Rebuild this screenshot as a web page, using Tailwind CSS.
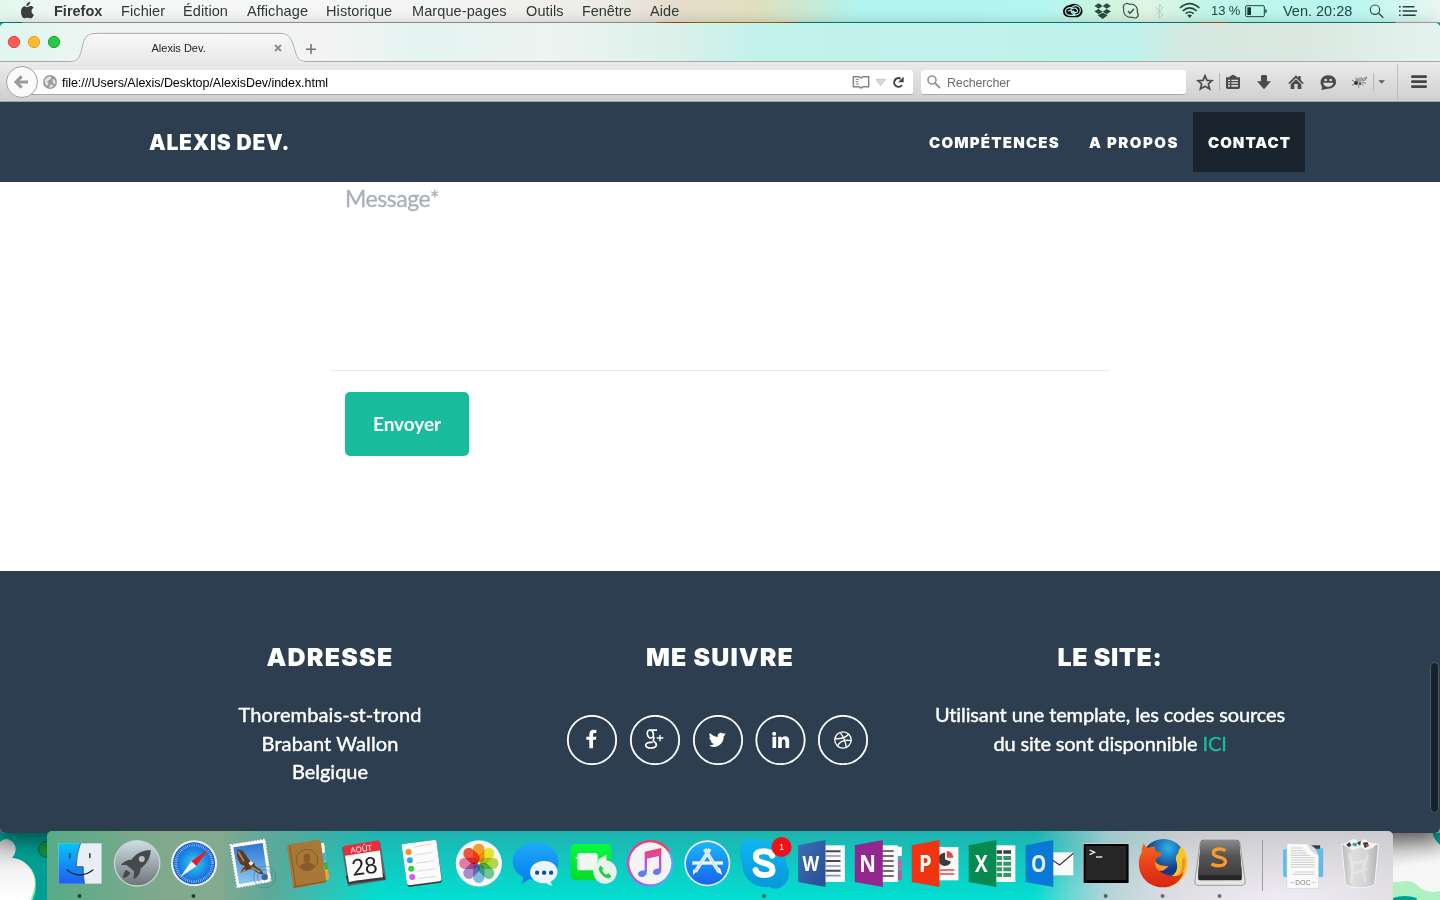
<!DOCTYPE html>
<html lang="fr">
<head>
<meta charset="utf-8">
<title>Alexis Dev.</title>
<script src="https://cdn.jsdelivr.net/npm/@tailwindcss/browser@4"></script>
</head>
<body class="w-[1440px] h-[900px] overflow-hidden relative bg-[#00a99d] font-['Liberation_Sans',sans-serif]">

<!-- Wallpaper -->
<svg class="absolute left-0 top-[820px]" width="1440" height="80" viewBox="0 0 4320 240">
  <defs>
    <linearGradient id="cl" x1="0" y1="0" x2="0" y2="1"><stop offset="0" stop-color="#c4c4c4"/><stop offset=".5" stop-color="#f3f3f3"/><stop offset="1" stop-color="#fff"/></linearGradient>
    <linearGradient id="cr" x1="0" y1="0" x2=".3" y2="1"><stop offset="0" stop-color="#8c8c8c"/><stop offset=".8" stop-color="#f6f6f6"/></linearGradient>
  </defs>
  <rect width="4320" height="240" fill="#009e94"/>
  <circle cx="140" cy="88" r="24" fill="#11933f" stroke="#0b5c3c" stroke-width="3"/>
  <path d="M50 120Q95 130 106 175Q112 205 98 240H0V120Z" fill="#8fe3a4"/>
  <path d="M0 66Q10 55 25 58Q46 66 47 88Q46 104 36 113Q85 118 102 170Q108 195 98 222L92 240H0Z" fill="url(#cl)"/>
  <rect x="4178" y="0" width="142" height="240" fill="#aef0c0"/>
  <path d="M3930 0H4320V212Q4290 222 4262 205Q4240 180 4215 183Q4190 190 3930 182Z" fill="url(#cr)"/>
  <path d="M4298 38H4320V74Q4300 56 4298 38Z M4178 234Q4215 222 4250 234V240H4178Z" fill="#00a093"/>
</svg>

<!-- Menu bar -->
<header class="absolute inset-x-0 top-0 h-[23px] flex text-[14px] leading-[22px] text-[#2f3a36] whitespace-nowrap [background:linear-gradient(90deg,#00837a_0px,#00837a_22px,#9a9a9a_23px,#9a9a9a_656px,#8a7a10_657px,#a04a10_680px,#8a7a10_700px,#8a7a10_770px,#a04a10_790px,#00837a_801px,#00837a_1198px,#9a5a20_1200px,#9a5a20_1228px,#00837a_1229px,#00837a_1395px,#a8a8a8_1396px)_0_22px/1440px_1px_no-repeat,linear-gradient(90deg,#e4f7ef_0px,#f6f8f7_90px,#f5f5f5_440px,#ecebe6_610px,#e5dccb_680px,#e0dfbe_760px,#c8ead6_810px,#b2f4ee_860px,#b3f6ef_1040px,#cff5e0_1110px,#e0f5e2_1150px,#c0f6ea_1210px,#b8f7f0_1350px,#e8f7f2_1440px)]">
  <svg class="w-[54px] h-[22px] shrink-0" viewBox="0 0 162 66"><path fill="#3b3f3d" d="M90 10C91 17 85 23 79 23C78 16 84 11 90 10ZM80 27C83 27 87 23 92 23C96 23 99 25 101 28C92 33 93 45 102 49C99 56 95 60 92 60C88 60 86 58 82 58C78 58 76 60 73 60C69 60 63 51 63 41C63 29 70 24 75 24C77 24 79 27 80 27Z" transform="translate(0 -5)"/></svg>
  <div class="flex w-[1001px] text-[14.500px] tracking-[0.1px]">
    <b class="w-[67px] tracking-normal">Firefox</b>
    <span class="w-[62px]">Fichier</span>
    <span class="w-[64px]">Édition</span>
    <span class="w-[79px]">Affichage</span>
    <span class="w-[86px]">Historique</span>
    <span class="w-[114px]">Marque-pages</span>
    <span class="w-[56px]">Outils</span>
    <span class="w-[68px] tracking-[-0.070px]">Fenêtre</span>
    <span>Aide</span>
  </div>
  <svg class="w-[33px] h-[22px]" viewBox="285 0 99 66"><path fill="#0a100e" d="M328 15Q345 6 359 17Q371 27 366 41Q360 52 347 52H328Q309 50 309 33Q311 19 328 15Z"/><g fill="none" stroke="#b9f5ec" stroke-width="3.500"><circle cx="347" cy="31" r="14"/><path d="M338 24Q318 20 316 34Q318 46 332 46H346M324 34Q332 28 338 36L346 44M336 27Q346 20 352 30Q354 38 346 38L338 32"/></g></svg>
  <svg class="w-[30px] h-[22px]" viewBox="384 0 90 66"><path fill="#2d4a42" d="M416 10L428 18L416 26L403 18ZM440 10L453 18L440 26L428 18ZM403 34L416 27L428 35L416 43ZM453 34L440 27L428 35L440 43ZM413 46L428 38L443 46L428 57Z"/></svg>
  <svg class="w-[28px] h-[22px]" viewBox="474 0 84 66"><path fill="none" stroke="#3f564c" stroke-width="3.500" d="M491 26C486 14 500 6 508 13C524 10 535 22 532 37C540 48 528 58 517 52C502 54 489 45 491 26Z"/><path fill="none" stroke="#3f564c" stroke-width="4.500" d="M504 33L510 40L522 26"/></svg>
  <svg class="w-[26px] h-[22px]" viewBox="558 0 78 66"><path fill="none" stroke="#b5cfc0" stroke-width="3" d="M586 22L609 44L598 54V13L609 23L586 45"/></svg>
  <svg class="w-[34px] h-[22px]" viewBox="636 0 102 66"><g fill="none" stroke="#24443c" stroke-width="5"><path d="M660 24Q689 -2 718 24"/><path d="M668 33Q689 14 710 33"/><path d="M677 41Q689 31 701 41"/></g><path fill="#24443c" d="M682 46Q689 41 696 46L689 54Z"/></svg>
  <span class="w-[36px] pl-[5px] text-[13px] tracking-[-0.100px] text-[#1c4a3f]">13 %</span>
  <svg class="w-[30px] h-[22px]" viewBox="846 0 90 66"><rect x="857" y="17" width="56" height="33" rx="4" fill="none" stroke="#1d4a41" stroke-width="3"/><rect x="862" y="22" width="11" height="23" fill="#123a32"/><path d="M917 28Q922 33 917 39Z" stroke="#1d4a41" stroke-width="2"/></svg>
  <span class="w-[88px] pl-[11px] text-[14.500px] text-[#1c4a3f]">Ven. 20:28</span>
  <svg class="w-[30px] h-[22px]" viewBox="1200 0 90 66"><circle cx="1245" cy="29" r="14" fill="none" stroke="#2c5248" stroke-width="3.500"/><path d="M1255 39L1270 53" stroke="#2c5248" stroke-width="4"/></svg>
  <svg class="w-[50px] h-[22px]" viewBox="1290 0 150 66"><path d="M1317 20H1322M1317 33H1322M1317 46H1322M1328 20H1363M1328 33H1371M1328 46H1367" stroke="#25423b" stroke-width="4.500"/></svg>
</header>

<!-- Browser window -->
<main class="absolute inset-x-0 top-[23px] h-[810px] rounded-[5px] overflow-hidden flex flex-col shadow-[0_8px_20px_rgba(0,0,0,0.5)] bg-white">
  <div class="h-[39px] shrink-0 relative bg-[linear-gradient(90deg,#dff5ef_0px,#eef5f3_90px,#f3f4f3_330px,#e4f4f1_420px,#edf3f1_550px,#dcf1ea_670px,#c3f1ec_760px,#bff2ec_1130px,#d5e8e0_1190px,#dbe8e1_1300px,#e4f3ef_1440px)]">
    <svg class="absolute inset-0" width="1440" height="39" viewBox="0 69 4320 117">
      <defs><linearGradient id="tab" x1="0" y1="0" x2="0" y2="1"><stop offset="0" stop-color="#f8f8f8"/><stop offset="1" stop-color="#e9e9e9"/></linearGradient></defs>
      <path d="M0 184.500H212C235 184 240 172 247 140C252 112 262 100 290 100H840C865 100 875 115 883 145C890 172 895 184 918 184.500H4320V190H0Z" fill="none" stroke="#a3a9a7" stroke-width="3"/>
      <path d="M212 186C237 184 242 172 249 140C254 112 264 102 290 102H840C863 102 873 115 881 145C888 172 893 184 918 186Z" fill="url(#tab)"/>
      <g stroke-width="3"><circle cx="42" cy="126" r="17" fill="#fc5b57" stroke="#e2443f"/><circle cx="102" cy="126" r="17" fill="#fdbc2f" stroke="#dfa023"/><circle cx="162" cy="126" r="17" fill="#29c941" stroke="#15ab2a"/></g>
      <path d="M825 135L843 153M843 135L825 153" stroke="#8d8d8d" stroke-width="6"/>
      <path d="M918 147.500H948M933 132V162" stroke="#6c7170" stroke-width="4.500"/>
    </svg>
    <div class="relative pl-[151.500px] pt-[17px] text-[11px] leading-[16px] text-[#222]">Alexis Dev.</div>
  </div>
  <div class="h-[40px] shrink-0 flex bg-linear-to-b from-[#ebebeb] to-[#cfcfcf] border-b border-[#a2a4a6]">
    <div class="w-[914px] relative pt-[8px] pl-[30px]">
      <div class="h-[25px] bg-white rounded-r-[3px] w-[883px] border-b border-[#a8a8a8] flex pl-[32px] text-[12.500px] leading-[26px] text-black whitespace-nowrap">
        <span class="w-[783px] tracking-[-0.044px]">file:///Users/Alexis/Desktop/AlexisDev/index.html</span>
        <svg class="w-[68px] h-[25px] shrink-0" viewBox="1095 210 204 75"><path d="M1120 230H1137L1143 234L1149 230H1166V260H1149L1143 264L1137 260H1120Z" fill="none" stroke="#858585" stroke-width="4.500"/><path d="M1127 238H1137M1127 245H1135M1127 252H1137" stroke="#858585" stroke-width="3"/><path d="M1188 238H1216L1202 257Z" fill="#d9d9d9" stroke="#b8b8b8" stroke-width="2"/><path d="M1266 255A13 13 0 1 1 1262 236" fill="none" stroke="#444" stroke-width="6"/><path d="M1271 230V247H1254Z" fill="#444"/></svg>
      </div>
      <svg class="absolute left-0 top-0" width="62" height="39" viewBox="0 186 186 117"><circle cx="66" cy="246" r="46.500" fill="#fafafa" stroke="#a3a3a3" stroke-width="3"/><path d="M84 246H50M65 229L48 246L65 263" fill="none" stroke="#999" stroke-width="9"/><circle cx="150" cy="246" r="21" fill="#9b9b9b"/><path d="M134 240Q142 228 154 230L152 238L142 244L146 252L140 258Q132 250 134 240ZM158 236Q168 240 166 252L158 250ZM150 254L162 256Q156 264 148 264Z" fill="#e2e2e2"/></svg>
    </div>
    <div class="w-[273px] pt-[8px] pl-[7px]">
      <div class="w-[265px] h-[25px] bg-white rounded-[3px] border-b border-[#a8a8a8] flex text-[12.500px] leading-[26px] text-[#6f6f6f]">
        <svg class="w-[26px] h-[25px]" viewBox="1323 210 78 75"><circle cx="1356" cy="240" r="12" fill="none" stroke="#969696" stroke-width="5"/><path d="M1365 249L1380 264" stroke="#969696" stroke-width="6"/></svg>
        <span class="tracking-[-0.160px]">Rechercher</span>
      </div>
    </div>
    <svg class="w-[34px] h-[39px]" viewBox="681 186 102 117"><path d="M735 227L741 241L756 242L745 252L749 267L735 259L721 267L725 252L714 242L729 241Z" fill="none" stroke="#4b4b4b" stroke-width="5"/><path d="M779 219V273" stroke="#b3b3b3" stroke-width="3"/></svg>
    <svg class="w-[28px] h-[39px]" viewBox="783 186 84 117"><path fill="#4b4b4b" fill-rule="evenodd" d="M798 232H809V228H813Q819 220 825 228H829V232H840V262Q840 267 835 267H803Q798 267 798 262ZM804 239V243H810V239ZM814 239V243H834V239ZM804 247V251H810V247ZM814 247V251H834V247ZM804 255V260H810V255ZM814 255V260H834V255Z"/></svg>
    <svg class="w-[31px] h-[39px]" viewBox="867 186 93 117"><path fill="#4b4b4b" d="M903 229Q903 225 908 225H916Q921 225 921 229V244H933L912 268L891 244H903Z"/></svg>
    <svg class="w-[32px] h-[39px]" viewBox="960 186 96 117"><path fill="#4b4b4b" d="M1008 226L1015 233V228H1022V240L1031 249L1028 253L1008 234L988 253L985 249ZM1008 238L1024 253V267H1013V252H1003V267H992V253Z"/></svg>
    <svg class="w-[32px] h-[39px]" viewBox="1056 186 96 117"><path fill="#4b4b4b" d="M1105 226C1120 226 1128 235 1128 246C1128 258 1118 266 1104 266C1098 266 1090 270 1083 269C1087 265 1087 262 1086 260C1078 250 1080 226 1105 226Z"/><g fill="#dedede"><circle cx="1097" cy="240" r="4"/><circle cx="1112" cy="240" r="4"/><path d="M1089 248H1120Q1117 260 1104 260Q1092 260 1089 248Z"/></g></svg>
    <svg class="w-[29px] h-[39px]" viewBox="1152 186 87 117"><ellipse cx="1198" cy="240" rx="12" ry="7" transform="rotate(-25 1198 240)" fill="#a5a5a5"/><circle cx="1188" cy="249" r="6" fill="#333"/><circle cx="1200" cy="251" r="4" fill="#555"/><path d="M1176 240L1184 246M1176 256L1184 252M1194 254L1197 263M1206 246L1218 250M1207 238L1220 231L1216 240L1208 242M1187 232L1192 242M1200 248L1210 256" fill="none" stroke="#666" stroke-width="2.500"/></svg>
    <svg class="w-[24px] h-[39px]" viewBox="1239 186 72 117"><path d="M1241 219V273" stroke="#b3b3b3" stroke-width="3"/><path d="M1255 241H1275L1265 251Z" fill="#5a5a5a"/></svg>
    <svg class="w-[43px] h-[39px]" viewBox="1311 186 129 117"><path d="M1312.500 192V300" stroke="#bdbdbd" stroke-width="3"/><path d="M1357 230H1397M1357 245H1397M1357 260H1397" stroke="#454545" stroke-width="8" stroke-linecap="round"/></svg>
  </div>

  <nav class="h-[80px] shrink-0 bg-[#2c3e50] flex items-center pl-[149px] pr-[135px] text-white font-[Inter,sans-serif] font-black whitespace-nowrap">
    <span class="text-[21px] leading-[60px] w-[765px] pt-px tracking-[0.750px]">ALEXIS DEV.</span>
    <div class="flex text-[15px] leading-[60px]">
      <a class="w-[160px] pl-[15px] pt-px tracking-[1.210px]">COMPÉTENCES</a>
      <a class="w-[119px] pl-[15px] pt-px tracking-[1.510px]">A PROPOS</a>
      <a class="w-[112px] h-[60px] pl-[15px] pt-px bg-[#1a242f] tracking-[1px]">CONTACT</a>
    </div>
  </nav>

  <section class="h-[389px] shrink-0 bg-white px-[330px] font-[Lato,sans-serif]">
    <div class="h-[189px] border-b border-[#e9ecee] pl-[15px] text-[23px] leading-[33px] text-[#a9b0b8] tracking-[-0.450px] [-webkit-text-stroke:0.300px_#a9b0b8]">Message*</div>
    <div class="mt-[21px] ml-[15px] w-[124px] h-[64px] rounded-[5px] bg-[#18bc9c] text-white font-bold text-[19px] leading-[64px] pl-[28px] tracking-[-0.067px]">Envoyer</div>
  </section>

  <footer class="grow bg-[#2c3e50] relative text-white pl-[135px] pr-[135px] pt-[69px] flex text-center font-[Lato,sans-serif] text-[20px] leading-[28.570px] whitespace-nowrap [font-variant-ligatures:none]">
    <div class="w-[390px]">
      <h3 class="font-[Inter,sans-serif] font-black text-[25px] leading-[34px] mb-[26px] tracking-[1.200px]">ADRESSE</h3>
      <p class="tracking-[0.100px] [-webkit-text-stroke:0.400px_white]">Thorembais-st-trond<br>Brabant Wallon<br><span class="tracking-normal">Belgique</span></p>
    </div>
    <div class="w-[390px]">
      <h3 class="font-[Inter,sans-serif] font-black text-[25px] leading-[34px] mb-[41px] tracking-[1.100px]">ME SUIVRE</h3>
      <div class="flex pl-[40px]">
        <svg class="w-[63px] h-[50px]" viewBox="45 255 189 150"><circle cx="126" cy="330" r="72.500" fill="none" stroke="#fff" stroke-width="5.500"/><path fill="#fff" d="M139 300V309H133Q129 309 129 314V320H139L138 329H129V355H118V329H109V320H118V313Q118 299 131 299Q137 299 139 300Z"/></svg>
        <svg class="w-[63px] h-[50px]" viewBox="234 255 189 150"><circle cx="315" cy="330" r="72.500" fill="none" stroke="#fff" stroke-width="5.500"/><g fill="none" stroke="#fff"><ellipse cx="301" cy="312" rx="9" ry="12" stroke-width="5" transform="rotate(-15 301 312)"/><path d="M302 300.500H321M309 320C318 326 304 330 312 335C325 343 319 354 302 354C284 354 281 338 301 337H308" stroke-width="5"/><path d="M320 324H340M330 315V334" stroke-width="4"/></g></svg>
        <svg class="w-[62.500px] h-[50px]" viewBox="423 255 187.500 150"><circle cx="504" cy="330" r="72.500" fill="none" stroke="#fff" stroke-width="5.500"/><path fill="#fff" d="M527 312Q524 317 521 319C522 337 508 351 492 351Q483 351 476 346Q486 347 492 342Q484 341 482 334H487Q478 331 478 322L483 324Q475 317 480 309Q489 320 503 321C501 310 512 304 520 311L527 308L522 315Z"/></svg>
        <svg class="w-[62.500px] h-[50px]" viewBox="610.500 255 187.500 150"><circle cx="690" cy="330" r="72.500" fill="none" stroke="#fff" stroke-width="5.500"/><circle cx="671" cy="311" r="6" fill="#fff"/><path fill="#fff" d="M666 320H677V354H666ZM683 320H693V325Q697 319 704 319Q716 319 716 334V354H705V336Q705 328 699 328Q694 328 694 335V354H683Z"/></svg>
        <svg class="w-[63px] h-[50px]" viewBox="798 255 189 150"><circle cx="879" cy="330" r="72.500" fill="none" stroke="#fff" stroke-width="5.500"/><g fill="none" stroke="#fff" stroke-width="4"><circle cx="879" cy="330" r="24.500"/><path d="M870 307Q886 326 889 353M854 326Q882 328 897 312M862 348Q874 326 904 332"/></g></svg>
      </div>
    </div>
    <div class="w-[390px]">
      <h3 class="font-[Inter,sans-serif] font-black text-[25px] leading-[34px] mb-[26px] tracking-[0.600px]">LE SITE:</h3>
      <p class="tracking-[-0.120px] [-webkit-text-stroke:0.400px_white]">Utilisant une template, les codes sources<br><span class="tracking-[-0.160px]">du site sont disponnible</span> <a class="text-[#18bc9c] [-webkit-text-stroke:0.400px_#18bc9c]">ICI</a></p>
    </div>
    <div class="absolute right-[1px] top-[91px] w-[9px] h-[151px] rounded-full bg-[#17212b] border border-[#4a5a68]"></div>
  </footer>
</main>

<!-- Dock -->
<aside class="absolute left-[47px] top-[831px] w-[1346px] h-[69px] rounded-t-[5px] flex pl-[3.500px] bg-[radial-gradient(ellipse_260px_70px_at_1240px_69px,rgba(242,238,246,0.95),rgba(242,238,246,0)),linear-gradient(90deg,#56ab86_0px,#7fa98c_110px,#84aa90_170px,#5fa898_220px,transparent_330px,transparent_990px,#9dc9cc_1060px,#cbccce_1140px,#cdcdcf_1346px),linear-gradient(180deg,#1eb4b0,#02dfd2)]">
  <svg class="w-[57.050px] h-[69px] shrink-0 overflow-visible" viewBox="151.500 33 171.150 207">
    <defs><linearGradient id="f1" x1="0" y1="0" x2="0" y2="1"><stop offset="0" stop-color="#06c3fb"/><stop offset="1" stop-color="#1c60f0"/></linearGradient></defs>
    <rect x="174" y="70" width="129" height="121" fill="#e9eef5" stroke="#c3cbd3" stroke-width="1"/><path d="M174 70H240Q228 100 227 140H248Q247 165 252 191H174Z" fill="url(#f1)"/><path d="M240 70Q228 100 227 140H248Q247 165 252 191" fill="none" stroke="#1d3557" stroke-width="2"/><path d="M208 101V113M268 101V113M200 150Q238 180 277 150" stroke="#14243a" stroke-width="4" fill="none" stroke-linecap="round"/><circle cx="237" cy="228" r="6" fill="#17472f"/>
  </svg>
  <svg class="w-[57.050px] h-[69px] shrink-0 overflow-visible" viewBox="322.650 33 171.150 207">
    <defs><linearGradient id="l1" x1="0" y1="0" x2="0" y2="1"><stop offset="0" stop-color="#cbdfe6"/><stop offset="1" stop-color="#6f7376"/></linearGradient></defs>
    <circle cx="410" cy="130" r="68" fill="url(#l1)" stroke="#ccd3d5" stroke-width="4"/><path fill="#46484b" d="M451 90C430 90 408 98 393 119C380 119 368 125 361 136L378 135L401 154L399 178C412 172 420 160 420 146C440 132 450 112 451 90ZM377 149Q367 160 368 175Q384 170 390 158Z"/><circle cx="424" cy="117" r="9" fill="#b6bdc1"/>
  </svg>
  <svg class="w-[57.050px] h-[69px] shrink-0 overflow-visible" viewBox="493.800 33 171.150 207">
    <defs><radialGradient id="s1"><stop offset="0" stop-color="#2ad3f5"/><stop offset="1" stop-color="#1559d8"/></radialGradient></defs>
    <circle cx="581" cy="130" r="69" fill="#eef3f6"/><circle cx="581" cy="130" r="63" fill="url(#s1)"/><circle cx="581" cy="130" r="55" fill="none" stroke="#c9ecfb" stroke-width="9" stroke-dasharray="1.500 4"/><path d="M624 87L573 124L588 138Z" fill="#fa1220"/><path d="M539 172L573 124L588 138Z" fill="#f4f4f4"/><circle cx="579" cy="228" r="6" fill="#17472f"/>
  </svg>
  <svg class="w-[57.050px] h-[69px] shrink-0 overflow-visible" viewBox="664.950 33 171.150 207">
    <defs><linearGradient id="m1" x1="0" y1="0" x2="0" y2="1"><stop offset="0" stop-color="#2b76d5"/><stop offset="1" stop-color="#8fc9f4"/></linearGradient></defs>
    <path d="M690 75L793 59L812 184L711 202Z" fill="#fff" stroke="#fff" stroke-width="5" stroke-dasharray="5 4"/><path d="M699 82L787 69L803 178L716 193Z" fill="url(#m1)"/><path fill="#5c3c22" d="M711 88Q705 110 720 132L734 139Q722 148 720 158L738 152Q745 147 757 148Q775 164 790 162L781 148L764 138L762 128L750 124Q744 116 728 92Z"/><path d="M713 94L731 124M753 142L780 156" stroke="#a58e74" stroke-width="5"/><path d="M744 130L751 123L760 128L752 138Z" fill="#f5efe0"/><path d="M720 158L738 152L732 146Z" fill="#d8822c"/><g fill="none" stroke="#4d7c8b" stroke-opacity=".7" stroke-width="2.500"><circle cx="793" cy="171" r="33"/><circle cx="793" cy="171" r="22"/><circle cx="793" cy="171" r="9" fill="#3c6786"/></g>
  </svg>
  <svg class="w-[57.050px] h-[69px] shrink-0 overflow-visible" viewBox="-3.900 33 171.150 207">
    <path d="M122 70L131 69L145 176L136 180Z" fill="#f1d9a0"/><path d="M122 70L131 69L134 97L125 99Z" fill="#f2f2f2"/><path d="M127 99L135 98L138 123L129 126Z" fill="#3bb5e8"/><path d="M130 127L140 125L143 148L134 151Z" fill="#32b44b"/><path d="M133 152L143 150L147 175L137 178Z" fill="#f6a11d"/>
    <path d="M20 80Q20 74 27 73L113 59Q119 58 121 64L138 182Q138 188 132 189L45 205Q39 206 38 200Z" fill="#a97839"/><path d="M28 76L47 203" stroke="#875b26" stroke-width="3"/><path d="M38 201L138 184" stroke="#7d5423" stroke-width="3"/><circle cx="80" cy="120" r="32" fill="none" stroke="#875c29" stroke-width="3"/><path d="M58 142Q62 130 74 130Q62 104 80 100Q98 104 86 129Q100 129 104 140Q82 162 58 142Z" fill="#875c29"/>
  </svg>
  <svg class="w-[57.050px] h-[69px] shrink-0 overflow-visible" viewBox="167.250 33 171.150 207">
    <path d="M185 82L300 66L318 180L203 198Z" fill="#5e6568"/><path d="M196 168L310 160L316 178L204 192Z" fill="#343a3d"/><path d="M194 104L299 91L308 172Q250 178 206 186Z" fill="#fbfbfb"/><path d="M190 78L295 61L300 91L195 107Z" fill="#ee2b37"/>
    <g transform="rotate(-8 250 120)" font-family="Liberation Sans,sans-serif" text-anchor="middle"><text x="248" y="95" font-size="25" fill="#fff" textLength="66" lengthAdjust="spacingAndGlyphs">AOÛT</text><text x="250" y="163" font-family="Lato,sans-serif" font-weight="400" font-size="68" fill="#222" textLength="78" lengthAdjust="spacingAndGlyphs">28</text></g>
  </svg>
  <svg class="w-[57.050px] h-[69px] shrink-0 overflow-visible" viewBox="338.400 33 171.150 207">
    <path d="M364 78Q363 73 369 72L462 60Q468 59 469 65L485 179Q485 187 480 188L389 200Q383 201 381 195Z" fill="#30373a"/><path d="M364 76Q363 73 369 72L462 60Q468 59 469 65L484 178Q484 183 478 184L388 196Q381 197 380 190Z" fill="#fbfbfb"/><path d="M400 81L454 72M403 105L458 97M407 130L462 122M411 154L466 146M412 176L466 169" stroke="#c9c9c9" stroke-width="2"/><circle cx="385" cy="96" r="9" fill="#fb8a22"/><circle cx="389" cy="121" r="9" fill="#28a4f5"/><circle cx="393" cy="146" r="9" fill="#2fd145"/><circle cx="396" cy="171" r="9" fill="#d95bea"/>
  </svg>
  <svg class="w-[57.050px] h-[69px] shrink-0 overflow-visible" viewBox="509.550 33 171.150 207">
    <circle cx="596" cy="132" r="69" fill="#b6bec0"/><circle cx="596" cy="130" r="69" fill="#f7f7f6"/>
    <g transform="translate(596 130)" class="*:mix-blend-multiply"><rect x="-17" y="-59" width="34" height="56" rx="17" fill="#fba22a"/><rect x="-17" y="-59" width="34" height="56" rx="17" fill="#f2e932" transform="rotate(45)"/><rect x="-17" y="-59" width="34" height="56" rx="17" fill="#b9dc4c" transform="rotate(90)"/><rect x="-17" y="-59" width="34" height="56" rx="17" fill="#6fcf9a" transform="rotate(135)"/><rect x="-17" y="-59" width="34" height="56" rx="17" fill="#86bfec" transform="rotate(180)"/><rect x="-17" y="-59" width="34" height="56" rx="17" fill="#ae94d3" transform="rotate(225)"/><rect x="-17" y="-59" width="34" height="56" rx="17" fill="#ea7fae" transform="rotate(270)"/><rect x="-17" y="-59" width="34" height="56" rx="17" fill="#f55a40" transform="rotate(315)"/></g>
  </svg>
  <svg class="w-[57.050px] h-[69px] shrink-0 overflow-visible" viewBox="680.700 33 171.150 207">
    <defs><linearGradient id="g1" x1="0" y1="0" x2="0" y2="1"><stop offset="0" stop-color="#1fa9fb"/><stop offset="1" stop-color="#067ee8"/></linearGradient></defs>
    <path d="M767 68C806 68 835 93 835 125C835 156 804 180 767 180Q756 180 747 177Q738 187 722 190Q732 180 728 170C708 160 698 143 698 125C698 93 728 68 767 68Z" fill="url(#g1)"/><path d="M791 123C816 123 832 137 832 156Q832 174 812 184Q811 191 817 197Q804 195 800 189C770 193 750 177 750 157C750 138 768 123 791 123Z" fill="#edf5fc"/><g fill="#0e4ea0"><circle cx="771" cy="158" r="6.500"/><circle cx="792" cy="158" r="6.500"/><circle cx="813" cy="158" r="6.500"/></g>
  </svg>
  <svg class="w-[57.050px] h-[69px] shrink-0 overflow-visible" viewBox="11.850 33 171.150 207">
    <defs><linearGradient id="ft" x1="0" y1="0" x2="0" y2="1"><stop offset="0" stop-color="#04fa3c"/><stop offset="1" stop-color="#06da2c"/></linearGradient></defs>
    <rect x="32" y="72" width="122" height="109" rx="14" fill="url(#ft)"/><rect x="52" y="99" width="61" height="52" rx="8" fill="#eff7ef"/><path d="M115 118L139 104V146L115 132Z" fill="#eff7ef"/><rect x="47" y="111" width="4" height="6" fill="#e3f3e3"/><circle cx="135" cy="156" r="35" fill="#e9f1ec"/><path d="M121 137Q113 143 119 155Q127 170 143 175Q151 176 154 168L145 160L138 164Q129 158 126 150L130 145Z" fill="#1fce45"/>
  </svg>
  <svg class="w-[57.050px] h-[69px] shrink-0 overflow-visible" viewBox="183 33 171.150 207">
    <defs><linearGradient id="it" x1=".2" y1="1" x2=".7" y2="0"><stop offset="0" stop-color="#b24df5"/><stop offset=".45" stop-color="#e8438f"/><stop offset="1" stop-color="#fa3c52"/></linearGradient><linearGradient id="ir" x1="0" y1=".3" x2="1" y2=".6"><stop offset="0" stop-color="#f0429a"/><stop offset=".4" stop-color="#b05af5"/><stop offset="1" stop-color="#38b9f5"/></linearGradient><linearGradient id="in" x1="0" y1="0" x2="0" y2="1"><stop offset="0" stop-color="#fb3e5d"/><stop offset=".5" stop-color="#b953df"/><stop offset="1" stop-color="#438bf4"/></linearGradient></defs>
    <circle cx="271" cy="130" r="70" fill="url(#ir)"/><path d="M202 120A70 70 0 0 1 330 92L271 130Z" fill="url(#it)"/><circle cx="271" cy="130" r="63" fill="#f5f3f6"/><path fill="url(#in)" d="M254 95L304 84V147Q304 164 291 165Q278 165 279 156Q280 147 297 145V108L261 116V154Q260 170 246 171Q233 170 234 161Q236 152 254 151Z"/>
  </svg>
  <svg class="w-[57.050px] h-[69px] shrink-0 overflow-visible" viewBox="354.150 33 171.150 207">
    <defs><linearGradient id="as" x1="0" y1="0" x2="0" y2="1"><stop offset="0" stop-color="#18b7fb"/><stop offset="1" stop-color="#1864ee"/></linearGradient></defs>
    <circle cx="442" cy="130" r="69" fill="#e8eef2"/><circle cx="442" cy="130" r="64" fill="url(#as)"/><path d="M397 129H489" stroke="#f4f8fb" stroke-width="10"/><path d="M434 87L477 155M450 87L406 155" stroke="#e9eef2" stroke-width="11"/><path d="M470 149L480 143L487 164L475 158ZM399 148L411 153L399 166Z" fill="#f4f4f4"/><path d="M434 87L477 155M450 87L406 155" stroke="#9bb6cc" stroke-width="1"/>
  </svg>
  <svg class="w-[57.050px] h-[69px] shrink-0 overflow-visible" viewBox="525.300 33 171.150 207">
    <defs><linearGradient id="sk" x1="0" y1="0" x2="0" y2="1"><stop offset="0" stop-color="#10b5f4"/><stop offset="1" stop-color="#0797d8"/></linearGradient></defs>
    <path d="M545 72C558 53 580 54 592 62C640 55 680 90 681 138C694 160 684 188 668 198C654 210 636 206 628 200C585 206 548 180 547 130C539 112 536 88 545 72Z" fill="url(#sk)"/><path d="M637 107Q632 94 612 94Q588 94 588 110Q588 123 612 129Q639 135 638 151Q637 165 613 165Q592 165 587 150" fill="none" stroke="#fff" stroke-width="18" stroke-linecap="round"/><circle cx="665" cy="81" r="30" fill="#f01018"/><text x="665" y="90" font-size="26" fill="#fff" text-anchor="middle" font-family="Liberation Sans,sans-serif">1</text><circle cx="612" cy="228" r="6" fill="#075e58"/>
  </svg>
  <svg class="w-[57.050px] h-[69px] shrink-0 overflow-visible" viewBox="696.450 33 171.150 207">
    <defs><linearGradient id="wd" x1="0" y1="0" x2="1" y2="1"><stop offset="0" stop-color="#3d6cb5"/><stop offset="1" stop-color="#274f92"/></linearGradient></defs>
    <rect x="790" y="76" width="65" height="110" fill="#fafafa"/><path d="M797 94H842M797 123H842M797 152H842" stroke="#4a4a52" stroke-width="6"/><path d="M797 108H842M797 138H842M797 167H842" stroke="#8294c4" stroke-width="5"/><path d="M715 76L797 60V201L715 186Z" fill="url(#wd)"/><text x="753" y="152" font-family="Open Sans,sans-serif" font-weight="bold" font-size="62" fill="#fff" text-anchor="middle" textLength="50" lengthAdjust="spacingAndGlyphs">W</text>
  </svg>
  <svg class="w-[57.050px] h-[69px] shrink-0 overflow-visible" viewBox="27.600 33 171.150 207">
    <rect x="173" y="80" width="13" height="28" fill="#fff"/><rect x="173" y="117" width="13" height="30" fill="#c365b6"/><rect x="173" y="150" width="13" height="30" fill="#a961ae"/><rect x="120" y="76" width="54" height="110" fill="#fafafa"/><path d="M128 93H162M128 108H162M128 123H162M128 138H162M128 153H162M128 168H162" stroke="#444" stroke-width="5"/><path d="M45 76L129 60V201L45 186Z" fill="#93278f"/><text x="83" y="156" font-family="Open Sans,sans-serif" font-weight="bold" font-size="70" fill="#fff" text-anchor="middle" textLength="50" lengthAdjust="spacingAndGlyphs">N</text>
  </svg>
  <svg class="w-[57.050px] h-[69px] shrink-0 overflow-visible" viewBox="198.750 33 171.150 207">
    <rect x="290" y="81" width="66" height="100" fill="#fafafa"/><path d="M316 98V118L334 125A20 20 0 1 1 316 98Z" fill="#3c3c3c"/><path d="M321 93A20 20 0 0 1 341 113H321Z" fill="#dd4b40"/><path d="M300 150H344M300 162H344" stroke="#dd4b40" stroke-width="4"/><path d="M216 76L299 60V201L216 186Z" fill="#f03412"/><text x="257" y="155" font-family="Open Sans,sans-serif" font-weight="bold" font-size="68" fill="#fff" text-anchor="middle" textLength="38" lengthAdjust="spacingAndGlyphs">P</text>
  </svg>
  <svg class="w-[57.050px] h-[69px] shrink-0 overflow-visible" viewBox="369.900 33 171.150 207">
    <rect x="462" y="76" width="65" height="110" fill="#fafafa"/><path d="M471 96H487M491 96H514" stroke="#3c3c3c" stroke-width="11"/><path d="M471 114H487M491 114H514M471 131H487M491 131H514M471 148H487M491 148H514M471 165H487M491 165H514" stroke="#2f9a66" stroke-width="12"/><path d="M387 76L470 60V201L387 186Z" fill="#078a50"/><text x="425" y="157" font-family="Open Sans,sans-serif" font-weight="bold" font-size="72" fill="#fff" text-anchor="middle" textLength="38" lengthAdjust="spacingAndGlyphs">X</text>
  </svg>
  <svg class="w-[57.050px] h-[69px] shrink-0 overflow-visible" viewBox="541.050 33 171.150 207">
    <rect x="630" y="97" width="71" height="69" fill="#fafafa"/><path d="M638 120L660 135L701 100" fill="none" stroke="#3c3c3c" stroke-width="4"/><path d="M558 76L641 60V201L558 186Z" fill="#0a78d6"/><text x="597" y="157" font-family="Open Sans,sans-serif" font-weight="bold" font-size="72" fill="#dff0ff" text-anchor="middle" textLength="46" lengthAdjust="spacingAndGlyphs">O</text>
  </svg>
  <svg class="w-[57.050px] h-[69px] shrink-0 overflow-visible" viewBox="712.200 33 171.150 207">
    <rect x="730" y="69" width="138" height="121" rx="4" fill="#c5cfcf"/><rect x="732" y="72" width="135" height="117" rx="2" fill="#050505"/><rect x="738" y="78" width="122" height="102" fill="#262626"/><path d="M750 90L765 97L750 104" fill="none" stroke="#f2f2f2" stroke-width="4"/><path d="M769 111H788" stroke="#f2f2f2" stroke-width="4"/><circle cx="798" cy="228" r="6" fill="#356d6b"/>
  </svg>
  <svg class="w-[57.050px] h-[69px] shrink-0 overflow-visible" viewBox="43.350 33 171.150 207">
    <defs><radialGradient id="ff" cx=".6" cy=".2" r=".8"><stop offset="0" stop-color="#2bb2ec"/><stop offset=".6" stop-color="#123a86"/></radialGradient><linearGradient id="fo" x1="0" y1="0" x2="0" y2="1"><stop offset="0" stop-color="#f36a1d"/><stop offset=".5" stop-color="#e8401c"/><stop offset="1" stop-color="#d8260f"/></linearGradient></defs>
    <circle cx="132" cy="125" r="68" fill="url(#ff)"/><path d="M186 78Q208 105 203 140C196 180 164 203 130 202L150 170Q178 160 172 128Q164 110 176 100Q175 92 186 78Z" fill="#f8c62a"/><path d="M196 110Q204 150 172 184Q190 150 188 118Z" fill="#f0912a"/><path d="M72 70Q76 80 86 84Q96 78 106 80Q104 90 112 95L128 99Q126 108 112 113Q106 124 110 130Q126 140 146 138Q136 154 118 152Q132 164 156 168Q180 170 192 155C184 184 160 202 130 202C90 202 58 172 58 132Q58 110 66 98Q66 82 72 70Z" fill="url(#fo)"/><path d="M108 122Q112 140 146 138Q136 154 118 152Q104 142 108 122Z" fill="#fa9a2b"/><circle cx="129" cy="228" r="6" fill="#6c6e70"/>
  </svg>
  <svg class="w-[57.050px] h-[69px] shrink-0 overflow-visible" viewBox="214.500 33 171.150 207">
    <defs><linearGradient id="su" x1="0" y1="0" x2="0" y2="1"><stop offset="0" stop-color="#8a8a8a"/><stop offset=".45" stop-color="#555"/><stop offset="1" stop-color="#3f3f3f"/></linearGradient></defs>
    <path d="M240 82Q241 60 252 60H350Q362 60 363 82L377 184Q378 196 366 196H237Q225 196 226 184Z" fill="#e5e5e5" stroke="#9c9c9c" stroke-width="3"/><path d="M244 66Q245 60 252 60H351Q358 60 359 66L367 164V176Q367 181 361 181H242Q236 181 236 176V164Z" fill="#262626"/><path d="M244 66Q245 60 252 60H351Q358 60 359 66L367 160Q367 166 361 166H242Q236 166 236 160Z" fill="url(#su)"/><path d="M318 92Q308 86 295 87Q280 90 282 101Q284 108 302 112Q318 116 318 125Q316 137 300 137Q286 138 276 132" fill="none" stroke="#fb9a2a" stroke-width="10"/><circle cx="300" cy="228" r="6" fill="#6c6e70"/>
  </svg>
  <div class="w-px h-[51px] mt-[9px] ml-[13.450px] bg-[#9b9da0] shrink-0"></div>
  <svg class="w-[57px] h-[69px] shrink-0 overflow-visible ml-[12.500px]" viewBox="466.500 33 171 207">
    <rect x="552" y="76" width="50" height="20" fill="#3c3c3c"/><path d="M491 90L500 86H600L611 84V167Q611 171 606 171H496Q491 171 491 166Z" fill="#5cbdea"/><path d="M502 71H562L597 108V205H502Z" fill="#fbfbfb" stroke="#c9c9c9" stroke-width="1.500"/><path d="M562 71Q572 96 597 108Q590 76 562 71Z" fill="#dcdcdc"/><path d="M514 84H550M514 92H556M514 99H562M514 106H572M514 113H586M514 120H586M514 127H586M514 134H586M514 141H586M526 156H586M518 163H586" stroke="#c2c2c2" stroke-width="2.500"/><text x="550" y="195" font-family="Liberation Sans,sans-serif" font-size="20" fill="#777" text-anchor="middle" textLength="46">DOC</text><path d="M512 188H524M576 188H588" stroke="#aaa" stroke-width="2"/>
  </svg>
  <svg class="w-[57px] h-[69px] shrink-0 overflow-visible" viewBox="637.500 33 171 207">
    <defs><linearGradient id="tr" x1="0" y1="0" x2="1" y2="0"><stop offset="0" stop-color="#b8b8b8"/><stop offset=".3" stop-color="#dedede"/><stop offset=".7" stop-color="#d2d2d2"/><stop offset="1" stop-color="#b0b0b0"/></linearGradient></defs>
    <path d="M666 74Q722 60 777 74L766 190Q764 202 722 203Q680 202 678 190Z" fill="url(#tr)" stroke="#f6f6f6" stroke-width="3"/><path d="M672 74L690 62L704 56L716 66L738 58L752 70L772 72L758 84L738 90L722 80L704 90L686 84Z" fill="#f5f5f5"/><path d="M680 74L690 66L696 76L688 82ZM712 68L724 62L722 78ZM730 68L744 66L748 78L736 84Z" fill="#3b3b3b"/><path d="M700 68L714 70L710 80L698 76Z" fill="#35a99c"/><path d="M738 72L746 74L742 82Z" fill="#d8622c"/><path d="M690 100L700 150L694 190M745 104L730 150L738 186M700 130L740 122M704 160L744 146" stroke="#fff" stroke-opacity=".3" stroke-width="9" fill="none"/>
  </svg>
</aside>
</body>
</html>
